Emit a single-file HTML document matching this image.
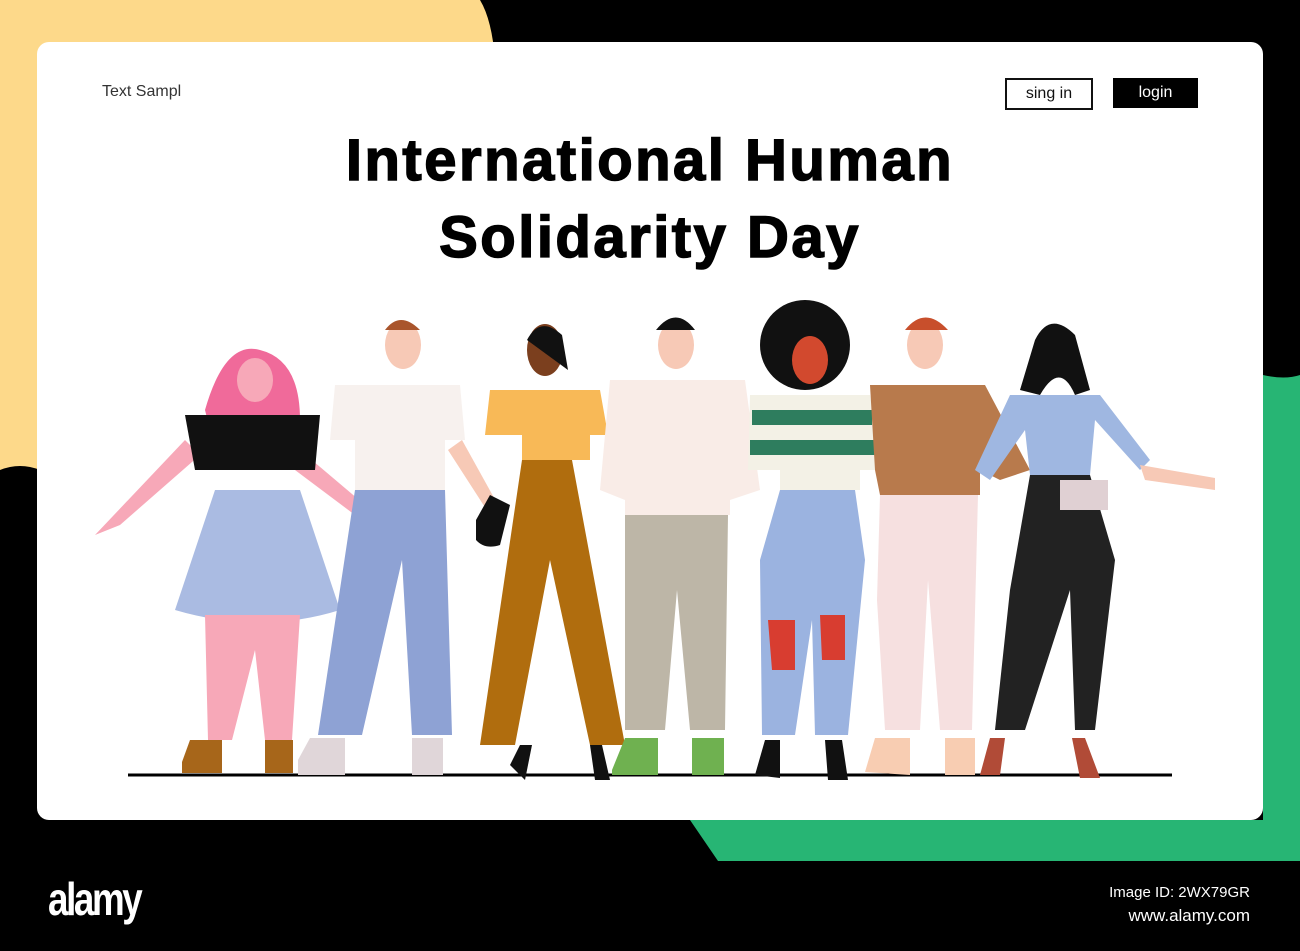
<!DOCTYPE html>
<html><head><style>
body{margin:0;width:1300px;height:951px;overflow:hidden;background:#000;font-family:"Liberation Sans",sans-serif;position:relative}
.abs{position:absolute}
</style></head><body>
<svg class="abs" style="left:0;top:0" width="1300" height="951">
<rect width="1300" height="951" fill="#000"/>
<path d="M0 0H480Q492 20 495 60L495 400H0Z" fill="#fdd98a"/>
<path d="M0 300H40V470Q20 462 0 470Z" fill="#fdd98a"/>
<path d="M1263 375Q1285 380 1300 375V861H718L690 820H1263Z" fill="#27b574"/>
<rect x="37" y="42" width="1226" height="778" rx="12" fill="#fff"/>
<rect x="0" y="861" width="1300" height="90" fill="#000"/>
<line x1="128" y1="775" x2="1172" y2="775" stroke="#000" stroke-width="3"/>
<g>
<path d="M205 410Q225 340 260 350Q300 360 300 420L290 440L210 430Z" fill="#f06a9a"/>
<ellipse cx="255" cy="380" rx="18" ry="22" fill="#f7a8b8"/>
<path d="M120 525L200 455L185 440L95 535Z" fill="#f7a8b8"/>
<path d="M300 450L365 505L355 515L295 470Z" fill="#f7a8b8"/>
<path d="M185 415H320L315 470H195Z" fill="#111"/>
<path d="M215 490H300L340 610Q260 635 175 610Z" fill="#aabbe2"/>
<path d="M205 615H300L292 740H265L255 650L232 740H208Z" fill="#f7a8b8"/>
<path d="M182 762L190 740H222V773H182Z" fill="#a7661a"/>
<path d="M265 740H293V773H265Z" fill="#a7661a"/>
</g>
<g>
<ellipse cx="403" cy="345" rx="18" ry="24" fill="#f7c9b6"/>
<path d="M385 330Q400 310 420 330Z" fill="#a9552c"/>
<path d="M335 385H460L465 440H445V490H355V440H330Z" fill="#f7f1ee"/>
<path d="M355 490H445L452 735H412L402 560L362 735H318Z" fill="#8ea2d4"/>
<path d="M298 760L310 738H345V775H298Z" fill="#e0d6d9"/>
<path d="M412 738H443V775H412Z" fill="#e0d6d9"/>
<path d="M462 440L498 505L488 512L448 450Z" fill="#f7c9b6"/>
</g>
<g>
<ellipse cx="545" cy="350" rx="18" ry="26" fill="#7b3f1e"/>
<path d="M527 340Q540 315 562 335L568 370Z" fill="#111"/>
<path d="M490 390H600L608 435H590V460H522V435H485Z" fill="#f8b957"/>
<path d="M522 460H572L625 745H590L550 560L515 745H480Z" fill="#b06d0e"/>
<path d="M476 520L490 495L510 505L500 545Q485 550 476 540Z" fill="#111"/>
<path d="M510 765L520 745H532L525 780Z" fill="#111"/>
<path d="M590 745H602L610 780H595Z" fill="#111"/>
</g>
<g>
<ellipse cx="676" cy="345" rx="18" ry="24" fill="#f7c9b6"/>
<path d="M656 330Q676 305 695 330Z" fill="#111"/>
<path d="M610 380H745L760 490L730 500V515H625V500L600 490Z" fill="#f9ece7"/>
<path d="M625 515H728L725 730H690L677 590L665 730H625Z" fill="#bdb6a7"/>
<path d="M612 770L625 738H658V775H612Z" fill="#6fb150"/>
<path d="M692 738H724V775H692Z" fill="#6fb150"/>
</g>
<g>
<circle cx="805" cy="345" r="45" fill="#111"/>
<ellipse cx="810" cy="360" rx="18" ry="24" fill="#d2492e"/>
<path d="M750 395H870L885 470H860V490H780V470H748Z" fill="#f3f1e6"/>
<path d="M752 410H872V425H752ZM750 440H880V455H750Z" fill="#2e7d5e"/>
<path d="M780 490H855L865 560L848 735H815L812 620L795 735H762L760 560Z" fill="#9bb3e0"/>
<path d="M768 620H795V670H772Z M820 615H845V660H822Z" fill="#d83d30"/>
<path d="M755 775L765 740H780V778Z M825 740H842L848 780H828Z" fill="#111"/>
</g>
<g>
<ellipse cx="925" cy="345" rx="18" ry="24" fill="#f7c9b6"/>
<path d="M905 330Q925 305 948 330Z" fill="#c84f2c"/>
<path d="M870 385H985L1030 470L1000 480L980 470V495H880L875 470Z" fill="#b87a4c"/>
<path d="M880 495H978L972 730H940L928 580L920 730H885L877 600Z" fill="#f6e0e0"/>
<path d="M865 772L875 738H910V775Z M945 738H975V775H945Z" fill="#f8cdb2"/>
</g>
<g>
<ellipse cx="1055" cy="350" rx="17" ry="24" fill="#f7c9b6"/>
<path d="M1035 340Q1050 310 1075 335L1090 390L1075 395Q1060 360 1040 395L1020 390Z" fill="#111"/>
<path d="M1010 395H1100L1150 460L1140 470L1095 420L1090 475H1030L1025 430L990 480L975 470Z" fill="#9fb7e1"/>
<path d="M1030 475H1090L1115 560L1095 730H1075L1070 590L1025 730H995L1010 590Z" fill="#222"/>
<path d="M1060 480H1108V510H1060Z" fill="#e0d0d3"/>
<path d="M1140 465L1215 478L1215 490L1145 480Z" fill="#f7c9b6"/>
<path d="M980 775L990 738H1005L1000 775Z M1072 738H1085L1100 778H1080Z" fill="#b14b37"/>
</g>
</svg>
<div class="abs" style="left:102px;top:83px;font-size:16px;color:#333">Text Sampl</div>
<div class="abs" style="left:1005px;top:78px;width:84px;height:28px;border:2px solid #111;font-size:16px;line-height:28px;text-align:center;color:#111">sing in</div>
<div class="abs" style="left:1113px;top:78px;width:85px;height:30px;background:#000;color:#fff;font-size:16px;line-height:30px;text-align:center">login</div>
<div class="abs" style="left:0;top:122px;width:1300px;text-align:center;font-size:58px;font-weight:900;line-height:77px;color:#000;letter-spacing:2.5px;-webkit-text-stroke:1.5px #000">International Human<br>Solidarity Day</div>
<div class="abs" style="left:48px;top:872px;font-size:46px;font-weight:bold;color:#fff;letter-spacing:-3px;transform:scaleX(0.8);transform-origin:left">alamy</div>
<div class="abs" style="left:1000px;top:884px;width:250px;text-align:right;font-size:15px;color:#fff;white-space:nowrap">Image ID: 2WX79GR</div>
<div class="abs" style="left:1000px;top:906px;width:250px;text-align:right;font-size:17px;color:#fff;white-space:nowrap">www.alamy.com</div>
</body></html>
